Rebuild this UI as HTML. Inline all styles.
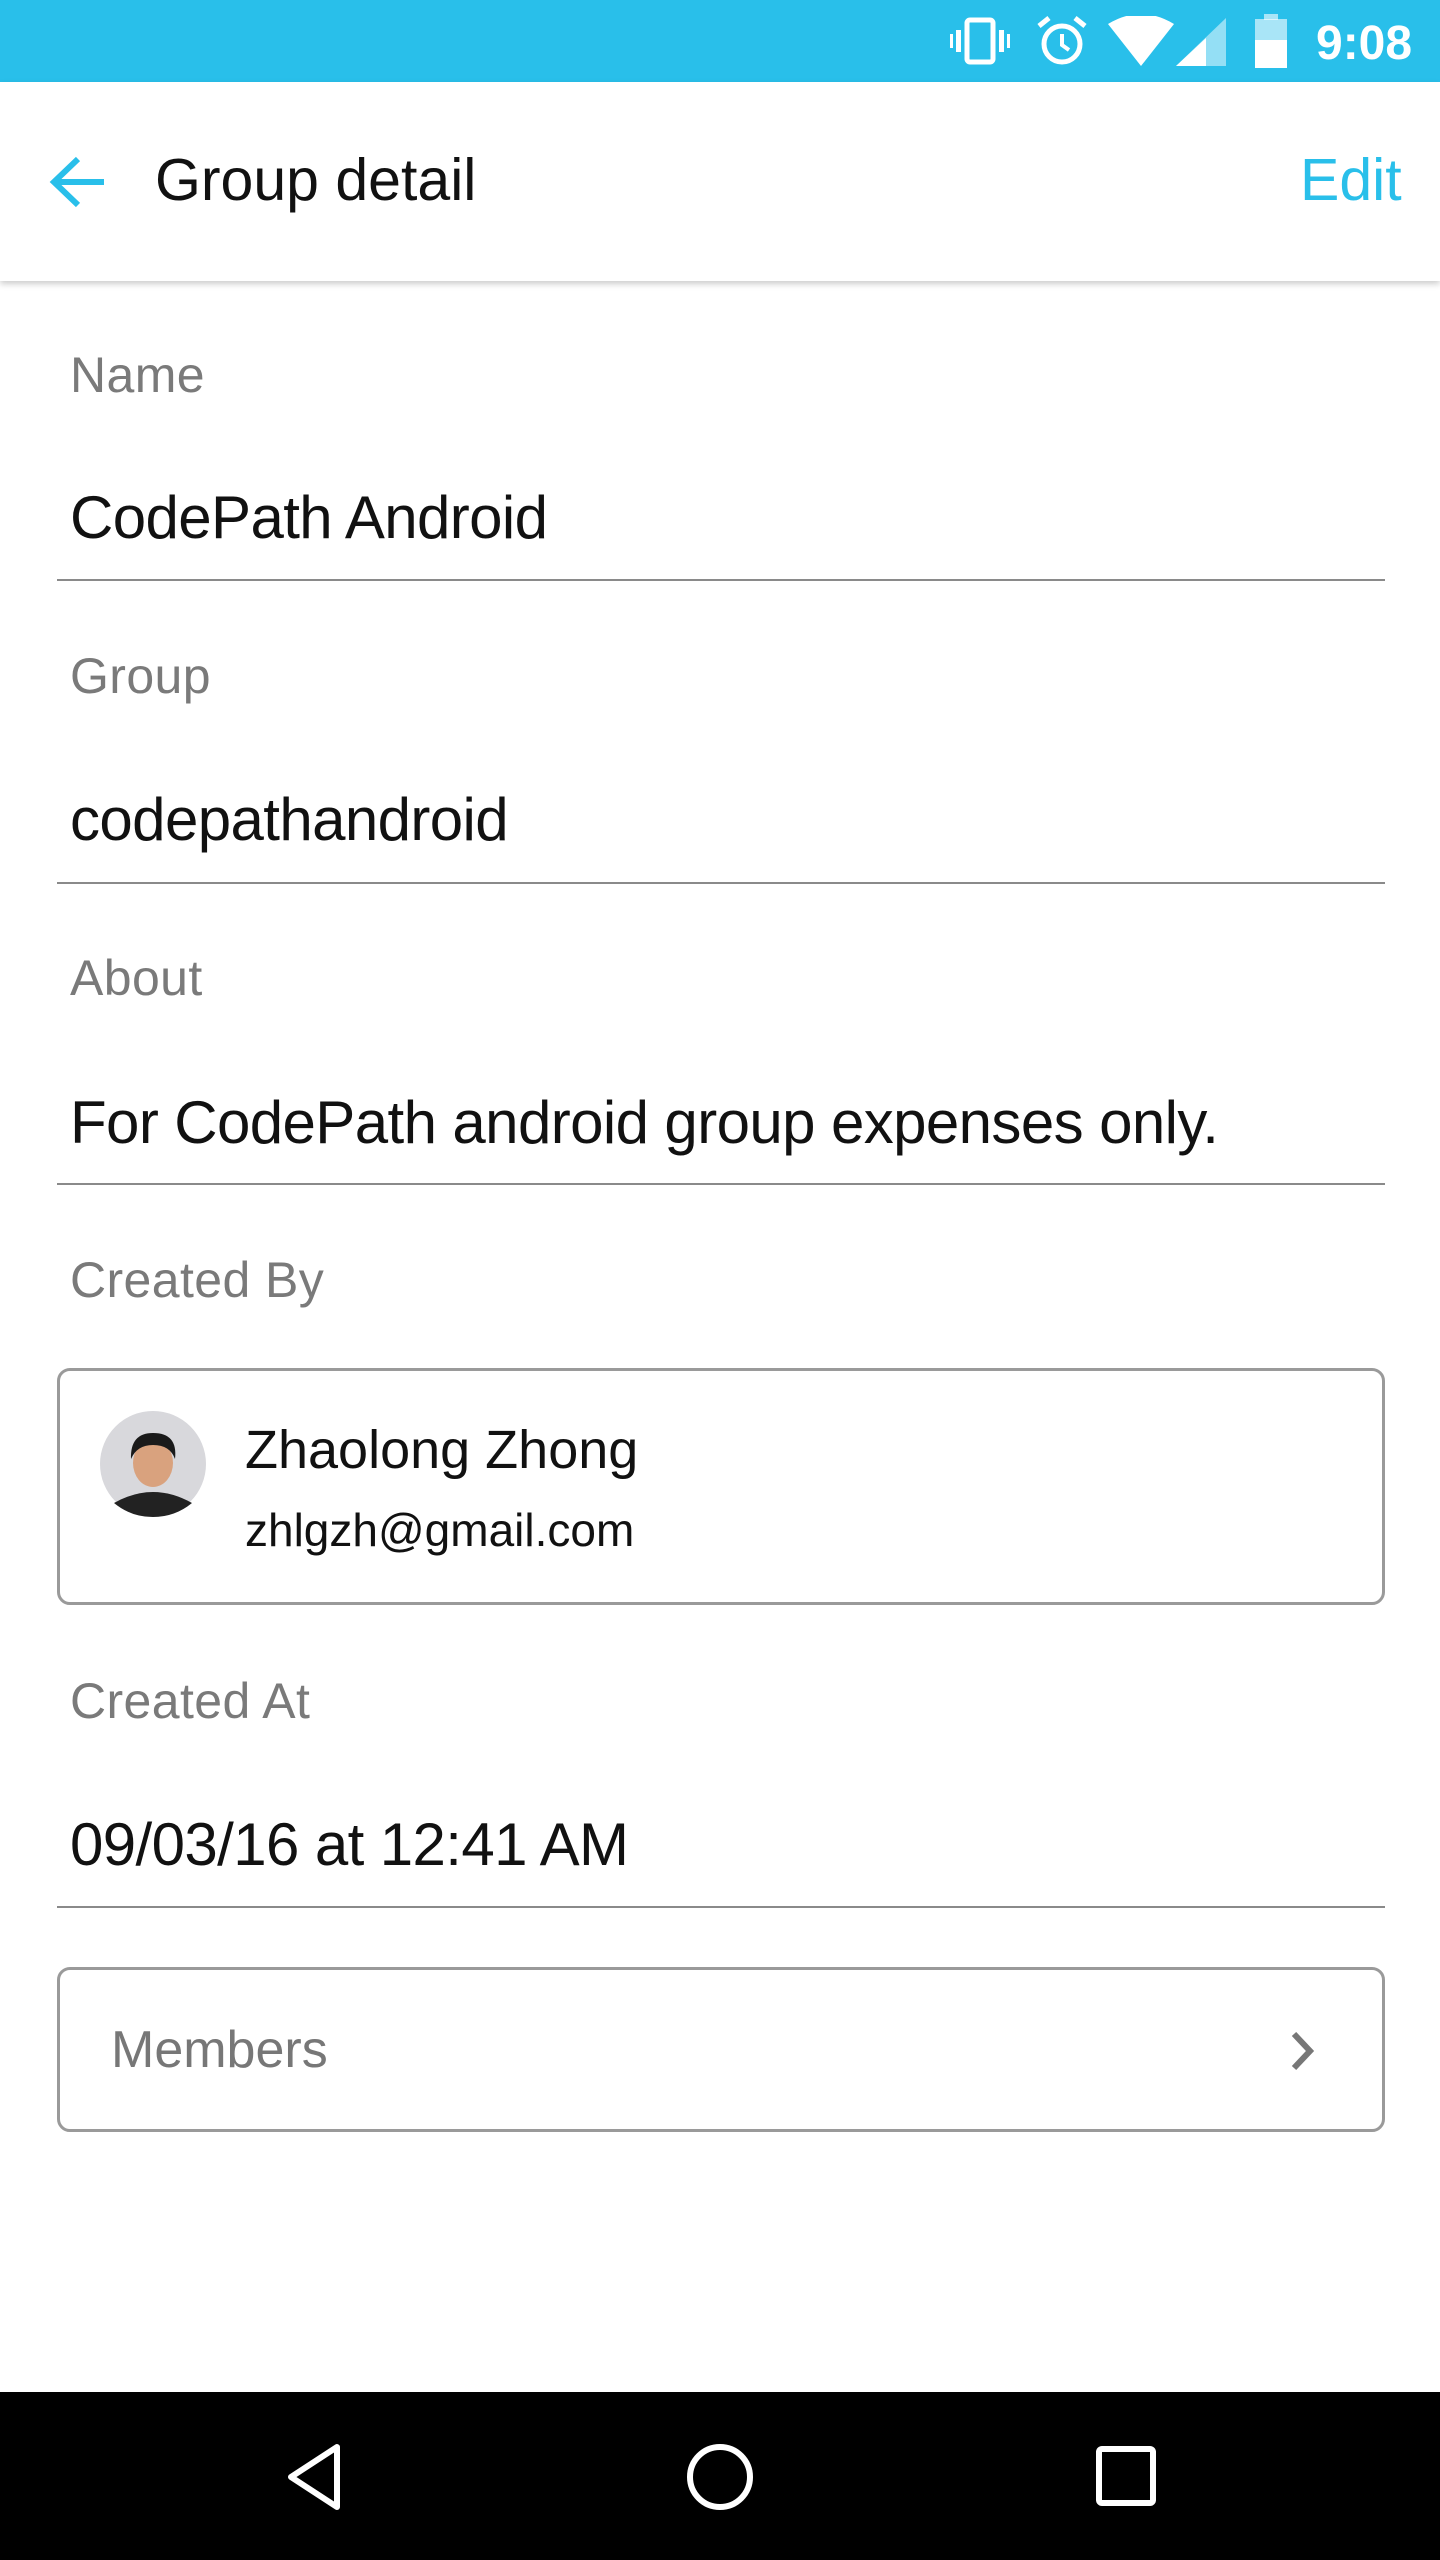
<!DOCTYPE html>
<html><head><meta charset="utf-8"><style>
*{margin:0;padding:0;box-sizing:border-box}
body{width:1440px;height:2560px;position:relative;background:#fff;font-family:"Liberation Sans",sans-serif;overflow:hidden}
.abs{position:absolute}
.status{left:0;top:0;width:1440px;height:82px;background:#29bfea}
.toolbar{left:0;top:82px;width:1440px;height:199px;background:#fff;box-shadow:0 3px 6px rgba(0,0,0,.2)}
.label{font-size:50px;color:#7a7a7a;left:70px;line-height:1;letter-spacing:0.4px}
.val{font-size:60px;color:#111;left:70px;line-height:1;letter-spacing:-0.6px}
.line{left:57px;width:1328px;height:2px;background:#8a8a8a}
.card{left:57px;width:1328px;border:3px solid #9a9a9a;border-radius:13px}
.nav{left:0;top:2392px;width:1440px;height:168px;background:#000}
</style></head><body>
<div class="abs status">
<svg class="abs" style="left:950px;top:16px" width="60" height="50" viewBox="0 0 60 50"><rect x="17" y="4" width="26" height="42" rx="3" fill="none" stroke="#fff" stroke-width="5"/><rect x="6" y="14" width="5" height="22" fill="#fff"/><rect x="49" y="14" width="5" height="22" fill="#fff"/><rect x="0" y="18" width="3" height="14" fill="#fff"/><rect x="57" y="18" width="3" height="14" fill="#fff"/></svg>
<svg class="abs" style="left:1035px;top:14px" width="54" height="54" viewBox="0 0 54 54"><circle cx="27" cy="30" r="18" fill="none" stroke="#fff" stroke-width="5"/><path d="M27 20v11l7 5" stroke="#fff" stroke-width="4" fill="none"/><path d="M4 12l10-8M50 12l-10-8" stroke="#fff" stroke-width="5"/></svg>
<svg class="abs" style="left:1108px;top:16px" width="66" height="50" viewBox="0 0 66 50"><path d="M0 8Q33-12 66 8L33 50Z" fill="#fff"/></svg>
<svg class="abs" style="left:1176px;top:18px" width="50" height="48" viewBox="0 0 50 48"><path d="M50 0V48H0Z" fill="#fff" opacity=".5"/><path d="M30 20V48H0L30 20Z" fill="#fff"/></svg>
<svg class="abs" style="left:1255px;top:14px" width="32" height="54" viewBox="0 0 32 54"><rect x="9" y="0" width="14" height="6" fill="#fff" opacity=".6"/><rect x="0" y="5" width="32" height="49" fill="#fff" opacity=".6"/><rect x="0" y="26" width="32" height="28" fill="#fff"/></svg>
<div class="abs" style="left:1316px;top:16px;font-size:48px;font-weight:bold;color:#fff">9:08</div>
</div>
<div class="abs toolbar">
<svg class="abs" style="left:48px;top:72px" width="60" height="56" viewBox="0 0 60 56"><path d="M56 28H8M30 5L6 28l24 23" stroke="#29bfea" stroke-width="6" fill="none"/></svg>
<div class="abs" style="left:155px;top:64px;font-size:59px;color:#111">Group detail</div>
<div class="abs" style="left:1300px;top:64px;font-size:59px;color:#29bfea">Edit</div>
</div>
<div class="abs label" style="top:350px">Name</div>
<div class="abs val" style="top:488px">CodePath Android</div>
<div class="abs line" style="top:579px"></div>
<div class="abs label" style="top:651px">Group</div>
<div class="abs val" style="top:790px">codepathandroid</div>
<div class="abs line" style="top:882px"></div>
<div class="abs label" style="top:953px">About</div>
<div class="abs val" style="top:1093px">For CodePath android group expenses only.</div>
<div class="abs line" style="top:1183px"></div>
<div class="abs label" style="top:1255px">Created By</div>
<div class="abs card" style="top:1368px;height:237px">
<svg class="abs" style="left:40px;top:40px" width="106" height="106" viewBox="0 0 106 106"><circle cx="53" cy="53" r="53" fill="#d8d8dc"/><path d="M14 92Q53 70 92 92Q75 106 53 106Q31 106 14 92Z" fill="#222"/><ellipse cx="53" cy="52" rx="20" ry="24" fill="#d9a27e"/><path d="M31 48Q30 22 53 22Q78 22 75 48Q70 34 53 34Q37 34 31 48Z" fill="#1a1a1a"/></svg>
<div class="abs" style="left:185px;top:48px;font-size:54px;color:#111">Zhaolong Zhong</div>
<div class="abs" style="left:185px;top:132px;font-size:46px;color:#111">zhlgzh@gmail.com</div>
</div>
<div class="abs label" style="top:1676px">Created At</div>
<div class="abs val" style="top:1815px">09/03/16 at 12:41 AM</div>
<div class="abs line" style="top:1906px"></div>
<div class="abs card" style="top:1967px;height:165px">
<div class="abs" style="left:51px;top:50px;font-size:52px;color:#777">Members</div>
<svg class="abs" style="left:1228px;top:58px" width="30" height="46" viewBox="0 0 30 46"><path d="M6 6l16 17L6 40" stroke="#777" stroke-width="6" fill="none"/></svg>
</div>
<div class="abs nav">
<svg class="abs" style="left:285px;top:50px" width="60" height="70" viewBox="0 0 60 70"><path d="M52 5V65L6 35Z" stroke="#fff" stroke-width="6" fill="none" stroke-linejoin="round"/></svg>
<svg class="abs" style="left:685px;top:50px" width="70" height="70" viewBox="0 0 70 70"><circle cx="35" cy="35" r="30" stroke="#fff" stroke-width="6" fill="none"/></svg>
<svg class="abs" style="left:1095px;top:53px" width="62" height="62" viewBox="0 0 62 62"><rect x="4" y="4" width="54" height="54" rx="3" stroke="#fff" stroke-width="6" fill="none"/></svg>
</div>
</body></html>
